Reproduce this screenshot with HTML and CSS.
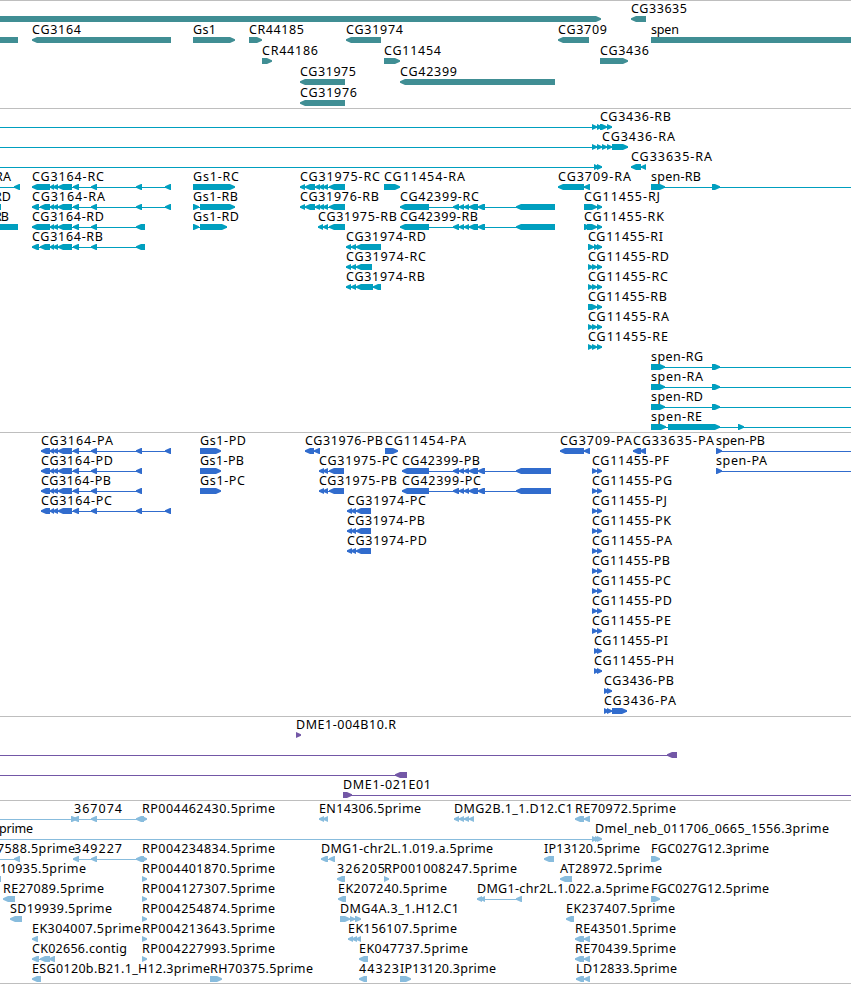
FILE: index.html
```html
<!DOCTYPE html>
<html lang="en">
<head>
    <meta charset="UTF-8">
    <title>Genome Browser</title>
    <link rel="stylesheet" href="styles.css">
</head>
<body>
    <div class="browser">
        <svg class="track genes" id="genes"></svg>
        <svg class="track transcripts" id="transcripts"></svg>
        <svg class="track cds" id="cds"></svg>
        <svg class="track bacs" id="bacs"></svg>
        <svg class="track ests" id="ests"></svg>
    </div>
<script src="tracks.js"></script>
</body>
</html>
```

FILE: styles.css
```css
body {
    margin: 0;
    background: #fff;
    overflow: hidden;
}

.browser {
    display: flex;
    flex-direction: column;
    width: 851px;
    height: 984px;
    box-sizing: border-box;
    border-bottom: 1px solid #bebebe;
}

.track {
    display: block;
    flex: none;
    width: 851px;
    box-sizing: border-box;
    border-top: 1px solid #bebebe;
    overflow: hidden;
}

.track text {
    fill: #000;
    font: 12.5px "Noto Sans", "DejaVu Sans", sans-serif;
}

.intron {
    shape-rendering: crispEdges;
}

.genes {
    height: 108px;
    fill: #408e94;
}

.transcripts {
    height: 324px;
    fill: #009fbf;
}

.cds {
    height: 284px;
    fill: #316ccd;
}

.bacs {
    height: 84px;
    fill: #7357a6;
}

.ests {
    height: 183px;
    fill: #88bcdd;
}
```

FILE: tracks.js
```javascript
const SVG = "http://www.w3.org/2000/svg"
const OFF_LEFT = -6
const OFF_RIGHT = 870

// exon blocks shared by several features
const cg3164 = [[50,54],[53,58],[58,72],[73,79],[91,97]]
const cg3164Full = [...cg3164, [136,142], [165,171]]
const cg31975 = [[300,305],[305,315],[315,320],[319,324],[323,328],[329,345]]
const cg42399 = [[453,459],[459,464],[464,469],[469,478],[478,485]]
const spen = [[651,665],[712,720]]
const cg11455 = [[588,593],[592,597],[597,602]]
const cg11455p = [[592,597],[597,602]]

// row, label, label start, label end, direction, blocks, line from, line to
const genes = [
    [0, "", 0, 0, ">", [[OFF_LEFT,601]]],
    [0, "CG33635", 631, 687, "<", [[631,646]]],
    [1, "", 0, 0, "<", [[-12,18]]],
    [1, "CG3164", 32, 81, "<", [[32,171]]],
    [1, "Gs1", 193, 216, ">", [[193,235]]],
    [1, "CR44185", 249, 304, ">", [[249,262]]],
    [1, "CG31974", 346, 403, "<", [[346,381]]],
    [1, "CG3709", 558, 607, "<", [[558,589]]],
    [1, "spen", 651, 679, ">", [[651,OFF_RIGHT]]],
    [2, "CR44186", 262, 318, ">", [[262,272]]],
    [2, "CG11454", 384, 441, ">", [[384,400]]],
    [2, "CG3436", 600, 649, ">", [[600,628]]],
    [3, "CG31975", 300, 356, "<", [[300,345]]],
    [3, "CG42399", 400, 457, "<", [[400,555]]],
    [4, "CG31976", 300, 357, "<", [[300,345]]]
]

const transcripts = [
    [0, "CG3436-RB", 600, 671, ">", [[592,597],[597,602],[600,607],[607,612]], OFF_LEFT],
    [1, "CG3436-RA", 602, 675, ">", [[592,597],[597,602],[602,607],[607,612],[612,628]], OFF_LEFT],
    [2, "", 0, 0, ">", [[594,599],[597,602]], OFF_LEFT],
    [2, "CG33635-RA", 631, 712, "<", [[631,641],[641,646]]],
    [3, "RA", -5, 11, "<", [[14,20]], OFF_LEFT],
    [3, "CG3164-RC", 32, 104, "<", [[32,50], ...cg3164Full]],
    [3, "Gs1-RC", 193, 239, ">", [[193,235]]],
    [3, "CG31975-RC", 300, 380, "<", cg31975],
    [3, "CG11454-RA", 384, 465, ">", [[384,400]]],
    [3, "CG3709-RA", 558, 631, "<", [[558,584],[584,590]]],
    [3, "spen-RB", 651, 701, ">", spen, 651, OFF_RIGHT],
    [4, "RD", -6, 11, "<", [[-12,1]]],
    [4, "CG3164-RA", 32, 105, "<", [[32,39],[40,50], ...cg3164Full]],
    [4, "Gs1-RB", 193, 238, ">", [[193,199],[200,235]]],
    [4, "CG31976-RB", 300, 379, "<", cg31975],
    [4, "CG42399-RC", 400, 479, "<", [[400,429], ...cg42399, [516,555]]],
    [4, "CG11455-RJ", 584, 660, ">", [[584,597],[597,602]]],
    [5, "RB", -6, 9, "<", [[-12,18]]],
    [5, "CG3164-RD", 32, 104, "<", [[32,50], ...cg3164, [136,145]]],
    [5, "Gs1-RD", 193, 239, ">", [[193,199],[200,227]]],
    [5, "CG31975-RB", 318, 397, "<", [[318,323],[323,328],[329,345]]],
    [5, "CG42399-RB", 400, 478, "<", [[400,429], ...cg42399, [516,555]]],
    [5, "CG11455-RK", 584, 664, ">", [[584,590],[587,597],[597,602]]],
    [6, "CG3164-RB", 32, 103, "<", [[32,39],[40,50], ...cg3164, [136,145]]],
    [6, "CG31974-RD", 346, 426, "<", [[346,351],[351,356],[356,381]]],
    [6, "CG11455-RI", 588, 663, ">", [[588,594],[594,599],[597,602]]],
    [7, "CG31974-RC", 346, 426, "<", [[346,351],[351,356],[356,372]]],
    [7, "CG11455-RD", 588, 669, ">", cg11455],
    [8, "CG31974-RB", 346, 425, "<", [[346,351],[351,356],[356,373],[373,381]]],
    [8, "CG11455-RC", 588, 668, ">", cg11455],
    [9, "CG11455-RB", 588, 667, ">", [[588,597],[597,602]]],
    [10, "CG11455-RA", 588, 669, ">", cg11455],
    [11, "CG11455-RE", 588, 668, ">", cg11455],
    [12, "spen-RG", 651, 703, ">", spen, 651, OFF_RIGHT],
    [13, "spen-RA", 651, 703, ">", spen, 651, OFF_RIGHT],
    [14, "spen-RD", 651, 703, ">", spen, 651, OFF_RIGHT],
    [15, "spen-RE", 651, 702, ">", [[651,666],[668,720],[738,744]], 651, OFF_RIGHT]
]

const cds = [
    [0, "CG3164-PA", 41, 113, "<", [[41,50], ...cg3164Full]],
    [0, "Gs1-PD", 200, 246, ">", [[200,221]]],
    [0, "CG31976-PB", 305, 383, "<", [[305,314],[314,320]]],
    [0, "CG11454-PA", 385, 466, ">", [[385,398]]],
    [0, "CG3709-PA", 560, 632, "<", [[560,584],[584,590]]],
    [0, "CG33635-PA", 633, 714, "<", [[633,641],[640,646]]],
    [0, "spen-PB", 716, 765, ">", [[716,722]], 716, OFF_RIGHT],
    [1, "CG3164-PD", 41, 113, "<", [[41,50], ...cg3164, [136,142]]],
    [1, "Gs1-PB", 200, 244, ">", [[200,221]]],
    [1, "CG31975-PC", 319, 398, "<", [[319,324],[323,328],[329,344]]],
    [1, "CG42399-PB", 402, 480, "<", [[402,429], ...cg42399, [516,551]]],
    [1, "CG11455-PF", 592, 669, ">", cg11455p],
    [1, "spen-PA", 716, 767, ">", [[716,722]], 716, OFF_RIGHT],
    [2, "CG3164-PB", 41, 111, "<", [[41,50], ...cg3164, [136,142]]],
    [2, "Gs1-PC", 200, 245, ">", [[200,221]]],
    [2, "CG31975-PB", 319, 397, "<", [[319,324],[323,328],[329,344]]],
    [2, "CG42399-PC", 402, 481, "<", [[402,429], ...cg42399, [516,551]]],
    [2, "CG11455-PG", 592, 672, ">", cg11455p],
    [3, "CG3164-PC", 41, 112, "<", [[41,50], ...cg3164Full]],
    [3, "CG31974-PC", 347, 426, "<", [[347,352],[351,356],[356,371]]],
    [3, "CG11455-PJ", 592, 667, ">", cg11455p],
    [4, "CG31974-PB", 347, 425, "<", [[347,352],[351,356],[356,371]]],
    [4, "CG11455-PK", 592, 671, ">", cg11455p],
    [5, "CG31974-PD", 347, 427, "<", [[347,352],[351,356],[356,371]]],
    [5, "CG11455-PA", 592, 672, ">", cg11455p],
    [6, "CG11455-PB", 592, 670, ">", cg11455p],
    [7, "CG11455-PC", 592, 671, ">", cg11455p],
    [8, "CG11455-PD", 592, 672, ">", cg11455p],
    [9, "CG11455-PE", 592, 671, ">", cg11455p],
    [10, "CG11455-PI", 594, 668, ">", [[594,599],[597,602]]],
    [11, "CG11455-PH", 594, 674, ">", [[594,599],[597,602]]],
    [12, "CG3436-PB", 604, 674, ">", [[604,609],[607,612]]],
    [13, "CG3436-PA", 604, 676, ">", [[604,609],[607,612],[612,627]]]
]

const bacs = [
    [0, "DME1-004B10.R", 296, 396, ">", [[296,301]]],
    [1, "", 0, 0, "<", [[667,677]], OFF_LEFT],
    [2, "", 0, 0, "<", [[395,407]], OFF_LEFT],
    [3, "DME1-021E01", 343, 431, ">", [[343,352]], 343, OFF_RIGHT]
]

const ests = [
    [0, "", 0, 0, ">", [[71,77]], OFF_LEFT],
    [0, "367074", 74, 122, "<", [[73,79],[91,97],[136,144]]],
    [0, "RP004462430.5prime", 142, 275, ">", [[142,147]]],
    [0, "EN14306.5prime", 319, 421, "<", [[319,324],[323,328]]],
    [0, "DMG2B.1_1.D12.C1", 454, 573, "<", [[454,459],[459,464],[464,469],[469,474]]],
    [0, "RE70972.5prime", 575, 676, "<", [[575,584],[584,590]]],
    [1, "prime", -1, 33, ">", [[592,597],[595,600],[597,602]], OFF_LEFT],
    [1, "Dmel_neb_011706_0665_1556.3prime", 595, 829, ">", []],
    [2, "7588.5prime", -3, 75, "<", [[14,20]], OFF_LEFT],
    [2, "349227", 74, 122, "<", [[73,79],[91,97],[136,144]]],
    [2, "RP004234834.5prime", 142, 275, ">", [[142,147]]],
    [2, "DMG1-chr2L.1.019.a.5prime", 321, 493, "<", [[321,328],[329,335]]],
    [2, "IP13120.5prime", 544, 640, "<", [[544,554]]],
    [2, "FGC027G12.3prime", 651, 769, ">", [[651,660]]],
    [3, "10935.5prime", 0, 86, "<", [[-12,1]]],
    [3, "RP004401870.5prime", 142, 275, ">", [[142,147]]],
    [3, "326205", 337, 385, "<", [[337,345]]],
    [3, "RP001008247.5prime", 384, 517, ">", [[384,389]]],
    [3, "AT28972.5prime", 560, 662, "<", [[560,572]]],
    [4, "RE27089.5prime", 3, 104, "<", [[3,15]]],
    [4, "RP004127307.5prime", 142, 275, ">", [[142,147]]],
    [4, "EK207240.5prime", 338, 447, "<", [[338,346]]],
    [4, "DMG1-chr2L.1.022.a.5prime", 477, 649, "<", [[477,482],[480,485],[516,522]]],
    [4, "FGC027G12.5prime", 651, 769, ">", [[651,660]]],
    [5, "SD19939.5prime", 10, 112, "<", [[10,22]]],
    [5, "RP004254874.5prime", 142, 275, ">", [[142,147]]],
    [5, "DMG4A.3_1.H12.C1", 340, 459, ">", [[340,350],[350,355],[355,361]]],
    [5, "EK237407.5prime", 566, 675, "<", [[566,574]]],
    [6, "EK304007.5prime", 32, 141, "<", [[32,38]]],
    [6, "RP004213643.5prime", 142, 275, ">", [[142,147]]],
    [6, "EK156107.5prime", 348, 457, "<", [[348,353],[352,357],[356,361]]],
    [6, "RE43501.5prime", 575, 676, "<", [[575,584],[584,590]]],
    [7, "CK02656.contig", 32, 127, "<", [[32,39],[40,50],[49,55]]],
    [7, "RP004227993.5prime", 142, 275, ">", [[142,147]]],
    [7, "EK047737.5prime", 359, 468, "<", [[359,368]]],
    [7, "RE70439.5prime", 575, 676, "<", [[575,584],[584,590]]],
    [8, "ESG0120b.B21.1_H12.3prime", 32, 210, "<", [[32,41]]],
    [8, "RH70375.5prime", 210, 313, ">", [[210,222]]],
    [8, "44323", 359, 399, "<", [[359,367]]],
    [8, "IP13120.3prime", 400, 496, ">", [[400,411]]],
    [8, "LD12833.5prime", 576, 677, "<", [[576,584],[584,590]]]
]

function add(svg, name, attrs) {
    const el = document.createElementNS(SVG, name)
    for (const key in attrs) {
        el.setAttribute(key, attrs[key])
    }
    svg.appendChild(el)
    return el
}

// a 6px bar with a pointed end, in the direction of the strand
function drawBlock(svg, a, b, top, dir) {
    const head = Math.min(5, b - a)
    let tip = b
    let neck = b - head
    let back = a
    if (dir === "<") {
        tip = a
        neck = a + head
        back = b
    }
    const points = [
        [back, top], [neck, top], [tip, top + 2.2],
        [tip, top + 3.8], [neck, top + 6], [back, top + 6]
    ]
    add(svg, "polygon", {points: points.join(" ")})
}

function drawTrack(id, features, pitch) {
    const svg = document.getElementById(id)
    for (const [row, label, x, end, dir, blocks, from, to] of features) {
        const top = 15 + row * pitch
        if (blocks.length > 1 || from !== undefined) {
            const start = from ?? blocks[0][0]
            const stop = to ?? blocks[blocks.length - 1][1]
            add(svg, "rect", {class: "intron", x: start, y: top + 3, width: stop - start, height: 1})
        }
        for (const [a, b] of blocks) {
            drawBlock(svg, a, b, top, dir)
        }
        if (label) {
            add(svg, "text", {x: x, y: top - 3, textLength: end - x}).textContent = label
        }
    }
}

drawTrack("genes", genes, 21)
drawTrack("transcripts", transcripts, 20)
drawTrack("cds", cds, 20)
drawTrack("bacs", bacs, 20)
drawTrack("ests", ests, 20)
```
